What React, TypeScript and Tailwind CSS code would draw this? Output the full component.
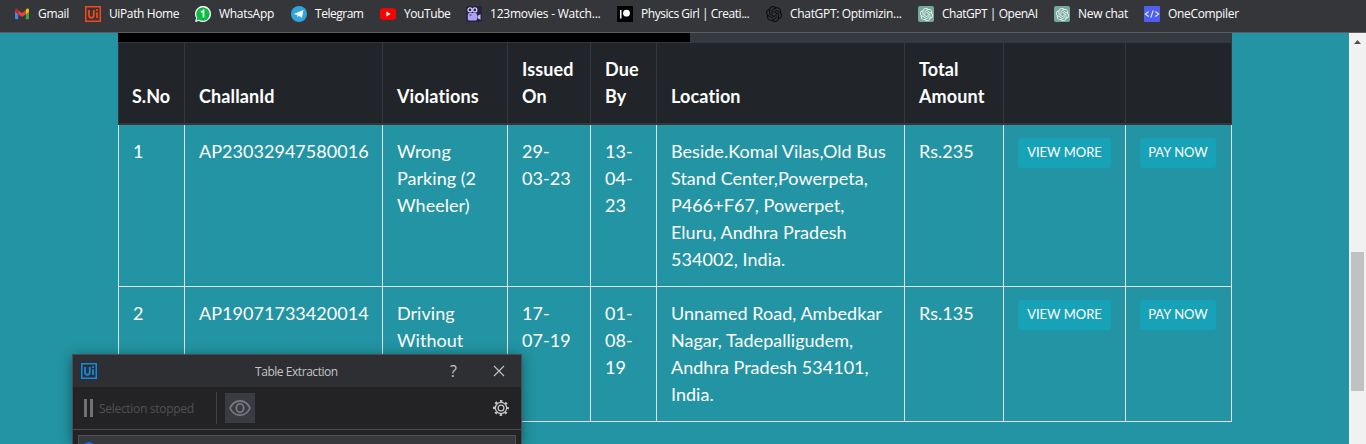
import React from "react";
import { SiOpenai } from "react-icons/si";

const columns = [
  { label: "S.No", width: "w-[66px]" },
  { label: "ChallanId", width: "w-[198px]" },
  { label: "Violations", width: "w-[125px]" },
  { label: "Issued On", width: "w-[83px]" },
  { label: "Due By", width: "w-[66px]" },
  { label: "Location", width: "w-[248px]" },
  { label: "Total Amount", width: "w-[99px]" },
  { label: "", width: "w-[122px]" },
  { label: "", width: "w-[107px]" },
];

const rows: { height: string; cells: string[][] }[] = [
  {
    height: "h-[162px]",
    cells: [
      ["1"],
      ["AP23032947580016"],
      ["Wrong", "Parking (2", "Wheeler)"],
      ["29-", "03-23"],
      ["13-", "04-", "23"],
      ["Beside.Komal Vilas,Old Bus", "Stand Center,Powerpeta,", "P466+F67, Powerpet,", "Eluru, Andhra Pradesh", "534002, India."],
      ["Rs.235"],
    ],
  },
  {
    height: "h-[135px]",
    cells: [
      ["2"],
      ["AP19071733420014"],
      ["Driving", "Without"],
      ["17-", "07-19"],
      ["01-", "08-", "19"],
      ["Unnamed Road, Ambedkar", "Nagar, Tadepalligudem,", "Andhra Pradesh 534101,", "India."],
      ["Rs.135"],
    ],
  },
];

function GmailIcon() {
  return (
    <svg viewBox="0 0 16 16" className="size-4">
      <path d="M1 4v8.300c0 .5.4.9.9.9h2.300V6.500z" fill="#4285f4" />
      <path d="M15 4v8.300c0 .5-.4.9-.9.9h-2.300V6.500z" fill="#34a853" />
      <path d="M11.800 4.200v4L15 5.700V4c0-1.300-1.400-2-2.400-1.200z" fill="#fbbc04" />
      <path d="M4.200 8.200v-4L8 7l3.800-2.800v4L8 11z" fill="#ea4335" />
      <path d="M1 4v1.700l3.200 2.500v-4L3.400 2.800C2.400 2 1 2.700 1 4z" fill="#c5221f" />
    </svg>
  );
}

function UiIcon({ color }: { color: string }) {
  return (
    <svg viewBox="0 0 16 16" className="size-4" fill="none" stroke={color}>
      <rect x=".75" y=".75" width="14.5" height="14.5" strokeWidth="1.500" />
      <path d="M4 4v5.200c0 3.400 4.800 3.400 4.800 0V4M12 6.300V12" strokeWidth="1.800" />
      <path d="M12 3.300v1.800" strokeWidth="1.800" />
    </svg>
  );
}

function WhatsAppIcon() {
  return (
    <svg viewBox="0 0 16 16" className="size-4">
      <path d="M0 16 1.100 12A8 8 0 1 1 4 14.900z" fill="#fff" />
      <path d="M1.500 14.500 2.300 11.700A6.700 6.700 0 1 1 4.300 13.700z" fill="#09bd43" />
      <path d="M6 6.200 8.500 4.500v7" fill="none" stroke="#fff" strokeWidth="1.700" />
    </svg>
  );
}

function TelegramIcon() {
  return (
    <svg viewBox="0 0 16 16" className="size-4">
      <circle cx="8" cy="8" r="8" fill="#2fa5de" />
      <path d="M2.800 7.900 12.400 4.100 10.900 12 7.900 9.800 6.400 11.200 6.100 8.900z" fill="#fff" />
      <path d="M6.100 8.900 10.400 6 7.200 9.300 6.400 11.200z" fill="#b9dcee" />
    </svg>
  );
}

function YouTubeIcon() {
  return (
    <svg viewBox="0 0 16 16" className="size-4">
      <rect y="2.300" width="16" height="11.400" rx="3" fill="#f00" />
      <path d="M6.400 5.600v4.800L10.600 8z" fill="#fff" />
    </svg>
  );
}

function CameraIcon() {
  return (
    <svg viewBox="0 0 16 16" className="size-4">
      <rect width="16" height="16" rx="2" fill="#26223f" />
      <rect x="1.800" y="7" width="9.200" height="7.500" rx="1.500" fill="#a9a2f5" />
      <path d="m11.500 9.800 3-1.600v5.500l-3-1.500z" fill="#c3bdfa" />
      <circle cx="4" cy="3.900" r="2" fill="#26223f" stroke="#d5d0ff" strokeWidth="1.300" />
      <circle cx="8.800" cy="3.900" r="2" fill="#26223f" stroke="#d5d0ff" strokeWidth="1.300" />
      <path d="M3.500 9h2" stroke="#3d3569" />
    </svg>
  );
}

function PatreonIcon() {
  return (
    <svg viewBox="0 0 16 16" className="size-4">
      <rect width="16" height="16" fill="#000" />
      <rect x="3" y="4" width="1.500" height="8.500" fill="#fff" />
      <circle cx="9.500" cy="7.200" r="3.400" fill="#fff" />
    </svg>
  );
}

function ChatIcon() {
  return (
    <span className="flex size-4 items-center justify-center rounded-[2px] bg-[#75a99c]">
      <SiOpenai className="size-[13px] text-[#eef6f3]" />
    </span>
  );
}

function CompilerIcon() {
  return (
    <svg viewBox="0 0 16 16" className="size-4" fill="none" stroke="#e4e6ff" strokeWidth="1.100">
      <rect width="16" height="16" rx="1" fill="#4e5ff0" stroke="none" />
      <path d="M4.700 5.500 1.300 8l3.400 2.500M11.300 5.500 14.700 8l-3.400 2.500M9.200 4.500l-2.400 7" />
    </svg>
  );
}

const bookmarks = [
  { icon: <GmailIcon />, label: "Gmail", width: "w-[71px]", spacing: "tracking-[-0.3px]" },
  { icon: <UiIcon color="#fa4616" />, label: "UiPath Home", width: "w-[110px]", spacing: "tracking-[-0.38px]" },
  { icon: <WhatsAppIcon />, label: "WhatsApp", width: "w-[96px]", spacing: "tracking-[-0.3px]" },
  { icon: <TelegramIcon />, label: "Telegram", width: "w-[89px]", spacing: "tracking-[-0.48px]" },
  { icon: <YouTubeIcon />, label: "YouTube", width: "w-[86px]", spacing: "tracking-[-0.42px]" },
  { icon: <CameraIcon />, label: "123movies - Watch...", width: "w-[151px]", spacing: "tracking-[-0.23px]" },
  { icon: <PatreonIcon />, label: "Physics Girl | Creati...", width: "w-[149px]", spacing: "tracking-[-0.45px]" },
  { icon: <SiOpenai className="size-4 text-[#0c0c0d]" />, label: "ChatGPT: Optimizin...", width: "w-[152px]", spacing: "tracking-[-0.32px]" },
  { icon: <ChatIcon />, label: "ChatGPT | OpenAI", width: "w-[136px]", spacing: "tracking-[-0.46px]" },
  { icon: <ChatIcon />, label: "New chat", width: "w-[90px]", spacing: "tracking-[-0.28px]" },
  { icon: <CompilerIcon />, label: "OneCompiler", width: "w-[110px]", spacing: "tracking-[-0.33px]" },
];

function ActionButton({ children, width }: { children: string; width: string }) {
  return (
    <button className={`block h-[30px] rounded-[3px] bg-[#17a2b8] pb-[2px] text-center text-[13px] leading-[28px] whitespace-nowrap ${width}`}>
      {children}
    </button>
  );
}

function ChallanTable() {
  return (
    <table className="w-[1114px] table-fixed border-separate border-spacing-0 text-left text-[18px] leading-[27px] text-white">
      <thead>
        <tr className="h-[83px] bg-[#212529]">
          {columns.map((c, i) => (
            <th
              key={i}
              className={`border-t border-b-2 border-l border-[#32383e] py-[13px] pr-2 pl-[14px] align-bottom font-bold tracking-[0.12px] first:pl-[13px] first:tracking-normal last:border-r ${c.width}`}
            >
              {c.label}
            </th>
          ))}
        </tr>
      </thead>
      <tbody>
        {rows.map((r, i) => (
          <tr key={i} className={r.height}>
            {r.cells.map((lines, j) => (
              <td key={j} className="border-b border-l border-[#dee2e6] py-[13px] pl-[14px] align-top tracking-[0.03px] whitespace-nowrap">
                {lines.map((line) => (
                  <div key={line}>{line}</div>
                ))}
              </td>
            ))}
            <td className="border-b border-l border-[#dee2e6] py-[13px] pl-[14px] align-top">
              <ActionButton width="w-[93px]">VIEW MORE</ActionButton>
            </td>
            <td className="border-r border-b border-l border-[#dee2e6] py-[13px] pl-[14px] align-top">
              <ActionButton width="w-[76px]">PAY NOW</ActionButton>
            </td>
          </tr>
        ))}
      </tbody>
    </table>
  );
}

function ExtractionWindow() {
  return (
    <section className="absolute top-[354px] left-[72px] h-[90px] w-[450px] border border-b-0 border-[#4b4c51] bg-[#232325] font-['Open_Sans',sans-serif] text-[12px] shadow-[0_2px_12px_rgba(0,0,0,0.4)]">
      <header className="flex h-8 items-center bg-[#2e2f33] pl-2 text-[#c4c4c6]">
        <UiIcon color="#0f8ae8" />
        <h2 className="ml-[158px] w-[195px] pt-px text-[12px] tracking-[-0.45px]">Table Extraction</h2>
        <span className="w-[43px] text-[16px]">?</span>
        <svg viewBox="0 0 12 12" className="size-3" stroke="#c4c4c6" strokeWidth="1.100">
          <path d="m1 1 10 10M11 1 1 11" />
        </svg>
      </header>
      <div className="flex h-[43px] items-center border-b border-[#4b4c51] pl-[11px]">
        <div className="flex h-[18px] w-[9px] justify-between">
          <span className="w-[3px] bg-[#717173]" />
          <span className="w-[3px] bg-[#717173]" />
        </div>
        <span className="ml-[6px] w-[117px] pt-px text-[12px] tracking-[-0.3px] text-[#505053]">Selection stopped</span>
        <span className="h-8 w-px bg-[#424246]" />
        <button className="ml-2 flex size-[30px] items-center justify-center bg-[#393a43]">
          <svg viewBox="0 0 22 16" className="h-4 w-[22px]" fill="none" stroke="#7b7b80" strokeWidth="1.700">
            <path d="M1 8C5.500-1.500 16.500-1.500 21 8 16.500 17.500 5.500 17.500 1 8z" />
            <ellipse cx="11" cy="8" rx="3.700" ry="4.300" />
          </svg>
        </button>
        <svg viewBox="0 0 16 16" className="ml-[238px] size-4" fill="none" stroke="#c8c8ca" strokeWidth="1.200">
          <circle cx="8" cy="8" r="5.600" />
          <circle cx="8" cy="8" r="2.900" />
          <circle cx="8" cy="8" r="7" strokeWidth="1.900" strokeDasharray="2.400 3.098" strokeDashoffset="1.200" />
        </svg>
      </div>
      <div className="mx-[5px] mt-[5px] h-[9px] overflow-hidden border border-b-0 border-[#515257] bg-[#37393e] pl-1">
        <svg viewBox="0 0 12 12" className="mt-[6px] size-3" fill="none" stroke="#0f6ff0" strokeWidth="2">
          <circle cx="6" cy="6" r="5" />
        </svg>
      </div>
    </section>
  );
}

export default function App() {
  return (
    <div className="relative flex h-[444px] w-[1366px] flex-col overflow-hidden bg-[#2394a3] font-['Lato',sans-serif]">
      <nav className="flex h-[33px] shrink-0 border-b border-[#5b5c5f] bg-[#35363a] pt-[6px] pl-[14px] font-['Open_Sans',sans-serif] text-[12px] leading-4 text-white">
        {bookmarks.map((b) => (
          <a key={b.label} className={`flex h-4 shrink-0 gap-2 whitespace-nowrap ${b.width} ${b.spacing}`}>
            <span className="size-4 shrink-0">{b.icon}</span>
            {b.label}
          </a>
        ))}
      </nav>
      <div className="flex min-h-0 flex-1">
        <main className="flex-1 pl-[118px]">
          <div className="h-[9px] w-[1114px] bg-[#343a40]">
            <div className="h-full w-[572px] bg-black" />
          </div>
          <ChallanTable />
        </main>
        <aside className="flex w-[17px] flex-col items-center bg-[#f1f1f1] pt-[7px]">
          <svg viewBox="0 0 7 4" className="h-1 w-[7px]" fill="#505050">
            <path d="M0 4 3.500 0 7 4z" />
          </svg>
          <div className="mt-[208px] h-[139px] w-[13px] bg-[#c1c1c1]" />
        </aside>
      </div>
      <ExtractionWindow />
    </div>
  );
}
